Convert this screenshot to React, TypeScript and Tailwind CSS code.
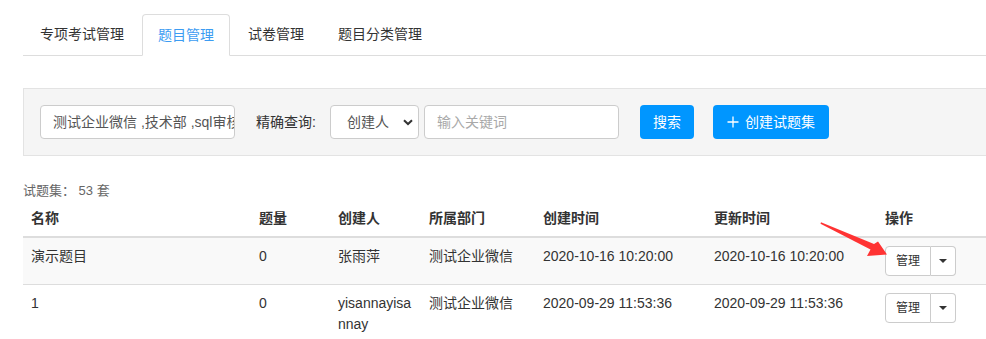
import React from "react";

const font = { fontFamily: '"Liberation Sans", "Noto Sans CJK SC", sans-serif' };

function Tabs() {
  const tabs = ["专项考试管理", "题目管理", "试卷管理", "题目分类管理"];
  return (
    <div className="flex border-b border-[#dddddd] h-[42px] items-end">
      {tabs.map((t, i) =>
        i === 1 ? (
          <div
            key={t}
            className="mr-[2px] -mb-px h-[42px] px-[15px] pt-[10px] leading-[20px] text-[14px] text-[#3c9cf2] bg-white border border-[#dddddd] border-b-white rounded-t-[4px]"
          >
            {t}
          </div>
        ) : (
          <div
            key={t}
            className={`${i === 0 ? "ml-[1px]" : ""} mr-[2px] h-[41px] px-[16px] pt-[10px] leading-[20px] text-[14px] text-[#333333]`}
          >
            {t}
          </div>
        )
      )}
    </div>
  );
}

function SearchPanel() {
  return (
    <div className="mt-[32px] mr-[-20px] border-y border-l border-[#e3e3e3] bg-[#f5f5f5] px-[16px] py-[16px] flex items-center">
      <div className="w-[195px] h-[34px] border border-[#cccccc] bg-white rounded-[4px] pl-[12px] overflow-hidden whitespace-nowrap text-[14px] leading-[32px] text-[#555555]">
        测试企业微信 ,技术部 ,sql审核组
      </div>
      <div className="ml-[21px] w-[62px] whitespace-nowrap text-[14px] text-[#333333]">精确查询:</div>
      <div className="ml-[12px] w-[89px] h-[34px] border border-[#cccccc] bg-white rounded-[4px] pl-[16px] pr-[5px] flex items-center justify-between text-[14px] text-[#555555]">
        <span>创建人</span>
        <svg width="10" height="7" viewBox="0 0 10 7">
          <path d="M1 1.2 L5 5 L9 1.2" fill="none" stroke="#333" strokeWidth="2" />
        </svg>
      </div>
      <div className="ml-[5px] w-[195px] h-[34px] border border-[#cccccc] bg-white rounded-[4px] pl-[12px] text-[14px] leading-[32px] text-[#a9a9a9]">
        输入关键词
      </div>
      <div className="ml-[21px] w-[54px] h-[34px] bg-[#0096ff] rounded-[4px] text-white text-[14px] flex items-center justify-center">
        搜索
      </div>
      <div className="ml-[19px] w-[116px] h-[34px] bg-[#0096ff] rounded-[4px] text-white text-[14px] flex items-center justify-center gap-[6px]">
        <svg width="12" height="12" viewBox="0 0 12 12">
          <path d="M6 0.5 V11.5 M0.5 6 H11.5" stroke="#fff" strokeWidth="1.3" />
        </svg>
        <span>创建试题集</span>
      </div>
    </div>
  );
}

function ActionBtn() {
  return (
    <div className="flex h-[30px]">
      <div className="w-[46px] h-[30px] border border-[#cccccc] bg-white rounded-l-[4px] flex items-center justify-center text-[12px] text-[#333333]">
        管理
      </div>
      <div className="w-[25px] h-[30px] border border-l-0 border-[#cccccc] bg-white rounded-r-[4px] flex items-center justify-center">
        <svg width="8" height="4" viewBox="0 0 8 4">
          <path d="M0 0 H8 L4 4 Z" fill="#333" />
        </svg>
      </div>
    </div>
  );
}

function DataTable() {
  const rows = [
    { name: "演示题目", n: "0", who: "张雨萍", dept: "测试企业微信", c: "2020-10-16 10:20:00", u: "2020-10-16 10:20:00", bg: "bg-[#f9f9f9]" },
    { name: "1", n: "0", who: "yisannayisannay", dept: "测试企业微信", c: "2020-09-29 11:53:36", u: "2020-09-29 11:53:36", bg: "bg-white" },
  ];
  const heads = ["名称", "题量", "创建人", "所属部门", "创建时间", "更新时间", "操作"];
  return (
    <table className="w-[963px] table-fixed border-collapse text-[14px] text-[#333333]">
      <colgroup>
        <col className="w-[228px]" />
        <col className="w-[79px]" />
        <col className="w-[91px]" />
        <col className="w-[114px]" />
        <col className="w-[171px]" />
        <col className="w-[171px]" />
        <col className="w-[109px]" />
      </colgroup>
      <thead>
        <tr className="border-b-2 border-[#dddddd]">
          {heads.map((h) => (
            <th key={h} className="text-left font-bold px-[8px] py-[8px] leading-[20px]">
              {h}
            </th>
          ))}
        </tr>
      </thead>
      <tbody>
        {rows.map((r, i) => (
          <tr key={i} className={`${r.bg} border-b border-[#dddddd] align-top`}>
            <td className="p-[8px] leading-[20px]">{r.name}</td>
            <td className="p-[8px] leading-[20px]">{r.n}</td>
            <td className="p-[8px] leading-[21px] break-all">{r.who}</td>
            <td className="p-[8px] leading-[20px] whitespace-nowrap">{r.dept}</td>
            <td className="p-[8px] leading-[20px] whitespace-nowrap">{r.c}</td>
            <td className="p-[8px] leading-[20px] whitespace-nowrap">{r.u}</td>
            <td className="p-[8px]">
              <ActionBtn />
            </td>
          </tr>
        ))}
      </tbody>
    </table>
  );
}

export default function App() {
  return (
    <div className="relative w-[986px] h-[339px] overflow-hidden bg-white" style={font}>
      <div className="pl-[23px] pt-[14px]">
        <Tabs />
        <SearchPanel />
        <div className="mt-[26px] h-[18px] leading-[18px] text-[13px] text-[#666666]">试题集：&nbsp;53 套</div>
        <DataTable />
      </div>
      <svg className="absolute left-0 top-0 pointer-events-none" width="986" height="339" viewBox="0 0 986 339">
        <polygon
          points="821,222.3 874,244 878,241.5 887,254.5 867,256 870.5,249.5 820.5,223.7"
          fill="#ff3333"
        />
      </svg>
    </div>
  );
}
